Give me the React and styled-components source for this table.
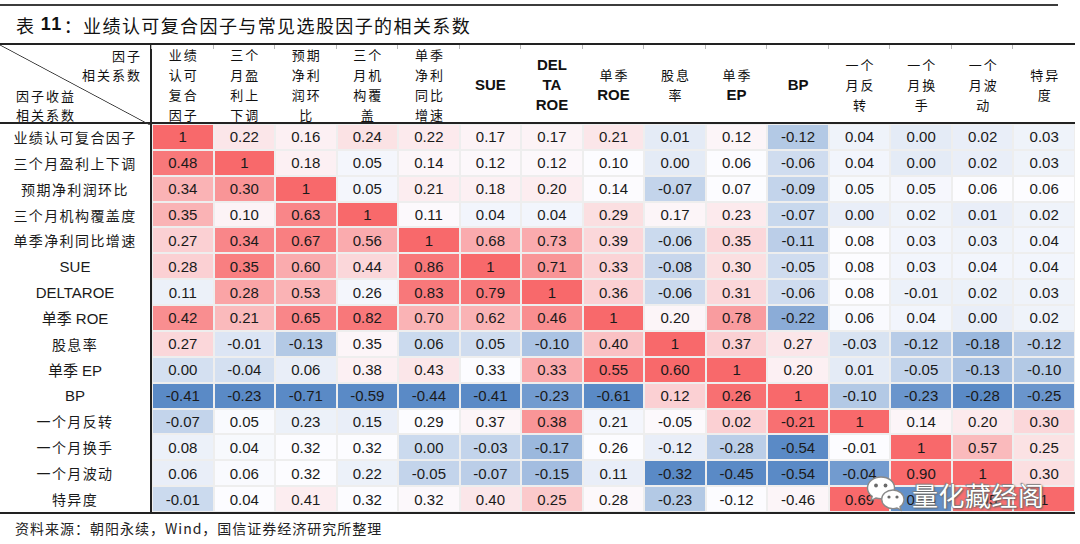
import React from "react"
import styled, { createGlobalStyle } from "styled-components"

const GlobalStyle = createGlobalStyle`
  html, body { margin: 0; padding: 0; background: #fff; }
  body {
    font-family: "Liberation Sans", "Noto Sans CJK SC", sans-serif;
    color: #111;
  }
`

// header columns: each entry is a list of lines, latin lines are drawn bold
const columns = [
  ["业绩", "认可", "复合", "因子"],
  ["三个", "月盈", "利上", "下调"],
  ["预期", "净利", "润环", "比"],
  ["三个", "月机", "构覆", "盖"],
  ["单季", "净利", "同比", "增速"],
  ["SUE"],
  ["DEL", "TA", "ROE"],
  ["单季", "ROE"],
  ["股息", "率"],
  ["单季", "EP"],
  ["BP"],
  ["一个", "月反", "转"],
  ["一个", "月换", "手"],
  ["一个", "月波", "动"],
  ["特异", "度"],
]

const rowNames = [
  "业绩认可复合因子",
  "三个月盈利上下调",
  "预期净利润环比",
  "三个月机构覆盖度",
  "单季净利同比增速",
  "SUE",
  "DELTAROE",
  "单季 ROE",
  "股息率",
  "单季 EP",
  "BP",
  "一个月反转",
  "一个月换手",
  "一个月波动",
  "特异度",
]

const values = [
  "1 0.22 0.16 0.24 0.22 0.17 0.17 0.21 0.01 0.12 -0.12 0.04 0.00 0.02 0.03",
  "0.48 1 0.18 0.05 0.14 0.12 0.12 0.10 0.00 0.06 -0.06 0.04 0.00 0.02 0.03",
  "0.34 0.30 1 0.05 0.21 0.18 0.20 0.14 -0.07 0.07 -0.09 0.05 0.05 0.06 0.06",
  "0.35 0.10 0.63 1 0.11 0.04 0.04 0.29 0.17 0.23 -0.07 0.00 0.02 0.01 0.02",
  "0.27 0.34 0.67 0.56 1 0.68 0.73 0.39 -0.06 0.35 -0.11 0.08 0.03 0.03 0.04",
  "0.28 0.35 0.60 0.44 0.86 1 0.71 0.33 -0.08 0.30 -0.05 0.08 0.03 0.04 0.04",
  "0.11 0.28 0.53 0.26 0.83 0.79 1 0.36 -0.06 0.31 -0.06 0.08 -0.01 0.02 0.03",
  "0.42 0.21 0.65 0.82 0.70 0.62 0.46 1 0.20 0.78 -0.22 0.06 0.04 0.00 0.02",
  "0.27 -0.01 -0.13 0.35 0.06 0.05 -0.10 0.40 1 0.37 0.27 -0.03 -0.12 -0.18 -0.12",
  "0.00 -0.04 0.06 0.38 0.43 0.33 0.33 0.55 0.60 1 0.20 0.01 -0.05 -0.13 -0.10",
  "-0.41 -0.23 -0.71 -0.59 -0.44 -0.41 -0.23 -0.61 0.12 0.26 1 -0.10 -0.23 -0.28 -0.25",
  "-0.07 0.05 0.23 0.15 0.29 0.37 0.38 0.21 -0.05 0.02 -0.21 1 0.14 0.20 0.30",
  "0.08 0.04 0.32 0.32 0.00 -0.03 -0.17 0.26 -0.12 -0.28 -0.54 -0.01 1 0.57 0.25",
  "0.06 0.06 0.32 0.22 -0.05 -0.07 -0.15 0.11 -0.32 -0.45 -0.54 -0.04 0.90 1 0.30",
  "-0.01 0.04 0.41 0.32 0.32 0.40 0.25 0.28 -0.23 -0.12 -0.46 0.69 0.85 0.95 1",
].map((r) => r.split(" "))

// shade of each cell, -1 = full blue, 0 = white, 1 = full red (read off the sheet)
const tones = [
  [1, 0.15, 0.08, 0.18, 0.12, 0.06, 0.06, 0.15, -0.15, 0.05, -0.45, -0.08, -0.15, -0.12, -0.08],
  [0.9, 1, 0.08, -0.05, 0.04, 0.03, 0.03, 0, -0.15, 0, -0.28, -0.06, -0.15, -0.12, -0.08],
  [0.5, 0.7, 1, -0.05, 0.1, 0.08, 0.1, 0.01, -0.35, 0, -0.35, -0.03, -0.04, 0, 0],
  [0.5, 0.06, 0.8, 1, 0.02, -0.06, -0.06, 0.2, 0.05, 0.12, -0.32, -0.12, -0.08, -0.12, -0.08],
  [0.3, 0.8, 0.85, 0.55, 1, 0.55, 0.55, 0.25, -0.3, 0.25, -0.4, 0, -0.06, -0.08, -0.06],
  [0.3, 0.85, 0.55, 0.25, 0.9, 1, 0.7, 0.28, -0.33, 0.2, -0.28, 0, -0.06, -0.06, -0.06],
  [-0.1, 0.6, 0.5, -0.05, 0.9, 0.9, 1, 0.3, -0.3, 0.25, -0.28, 0, -0.1, -0.1, -0.08],
  [0.75, 0.45, 0.8, 0.9, 0.5, 0.5, 0.75, 1, 0.05, 0.65, -0.7, -0.02, -0.06, -0.12, -0.08],
  [0.25, -0.2, -0.45, 0.05, -0.3, -0.28, -0.5, 0.4, 1, 0.3, 0.15, -0.22, -0.42, -0.6, -0.42],
  [-0.25, -0.25, -0.12, 0.08, 0.15, 0, 0.55, 0.95, 1, 1, 0.08, -0.15, -0.35, -0.5, -0.45],
  [-1, -1, -1, -1, -1, -1, -0.85, -1, 0.3, 0.95, 1, -0.45, -0.9, -1, -0.9],
  [-0.35, -0.02, -0.1, -0.12, 0, 0.05, 0.7, -0.05, 0.02, 0.3, 0.95, 1, 0.05, 0.12, 0.25],
  [-0.1, -0.03, 0, 0, -0.3, -0.35, -0.6, 0, -0.12, -0.4, -1, 0, 1, 0.45, 0.18],
  [-0.12, -0.02, 0, -0.1, -0.35, -0.4, -0.55, -0.12, -1, -1, -1, -0.85, 1, 1, 0.2],
  [-0.3, 0, 0.1, 0, 0.03, 0.15, 0.35, 0.03, -0.45, 0, 0.05, 1, -0.95, 0.95, 1],
]

const WHITE = [252, 252, 255]
const RED = [248, 105, 107]
const BLUE = [90, 138, 198]

const heat = (t) => {
  const end = t >= 0 ? RED : BLUE
  const k = Math.abs(t)
  const c = WHITE.map((v, i) => Math.round(v + (end[i] - v) * k))
  return `rgb(${c.join(",")})`
}

const isLatin = (s) => /^[A-Za-z ]+$/.test(s)

export default function App() {
  return (
    <Page>
      <GlobalStyle />
      <TopRule />
      <Title>
        表 <b>11</b>：业绩认可复合因子与常见选股因子的相关系数
      </Title>
      <Table>
        <HeadRow>
          <Corner>
            <CornerTop>
              <span>因子</span>
              <span>相关系数</span>
            </CornerTop>
            <CornerBottom>
              <span>因子收益</span>
              <span>相关系数</span>
            </CornerBottom>
          </Corner>
          {columns.map((lines, i) => (
            <HeadCell key={i}>
              {lines.map((l, j) => (
                <HeadLine key={j} $latin={isLatin(l)}>
                  {l}
                </HeadLine>
              ))}
            </HeadCell>
          ))}
        </HeadRow>
        <Body>
          {rowNames.map((name, r) => (
            <React.Fragment key={r}>
              <RowLabel $latin={isLatin(name.replace(/单季 /, ""))}>{name}</RowLabel>
              {values[r].map((v, c) => (
                <Cell key={c} $tone={tones[r][c]}>
                  {v}
                </Cell>
              ))}
            </React.Fragment>
          ))}
        </Body>
      </Table>
      <Footer>资料来源：朝阳永续，Wind，国信证券经济研究所整理</Footer>
      <Watermark>
        <WeChatLogo />
        <MarkText>量化藏经阁</MarkText>
      </Watermark>
    </Page>
  )
}

function WeChatLogo() {
  return (
    <svg width="40" height="38" viewBox="0 0 40 38">
      <path
        d="M15 2C7.3 2 1.5 7 1.5 13c0 3.4 1.8 6.4 4.7 8.4L5 25.5l4.8-2.5c1.6.5 3.4.8 5.2.8 7.7 0 13.5-5 13.5-11S22.7 2 15 2z"
        fill="#fff"
        stroke="#8a8a8a"
        strokeWidth="1.4"
      />
      <circle cx="10" cy="10.5" r="1.9" fill="#6a6a6a" />
      <circle cx="19.5" cy="10.5" r="1.9" fill="#6a6a6a" />
      <path
        d="M27 15c-6.4 0-11.3 4.2-11.3 9.3s4.9 9.3 11.3 9.3c1.4 0 2.8-.2 4-.6l4 2.1-1-3.4c2.5-1.7 4-4.3 4-7.4 0-5.1-4.9-9.3-11-9.3z"
        fill="#fff"
        stroke="#8a8a8a"
        strokeWidth="1.4"
      />
      <circle cx="23" cy="22" r="1.6" fill="#6a6a6a" />
      <circle cx="31" cy="22" r="1.6" fill="#6a6a6a" />
    </svg>
  )
}

const Page = styled.div`
  position: relative;
  width: 1080px;
  height: 544px;
  overflow: hidden;
  background: #fff;
`
const TopRule = styled.div`
  margin-top: 4px;
  width: 1058px;
  height: 2px;
  background: #3c3c3c;
`
const Title = styled.div`
  height: 37px;
  display: flex;
  align-items: center;
  padding-left: 16px;
  font-family: "Noto Sans CJK SC", sans-serif;
  font-size: 18px;
  letter-spacing: 1.4px;
  white-space: pre;
  b {
    font-family: "Liberation Sans", sans-serif;
    font-weight: 700;
    margin-right: 1px;
  }
`
const Table = styled.div`
  width: 1075px;
  border-top: 2px solid #222;
  border-bottom: 2px solid #222;
`
const HeadRow = styled.div`
  display: grid;
  grid-template-columns: 152px repeat(15, 1fr);
  height: 77px;
  border-bottom: 2px solid #222;
`
const Corner = styled.div`
  box-sizing: border-box;
  border-right: 2px solid #222;
  background: linear-gradient(
    to top right,
    transparent calc(50% - 0.8px),
    #333 50%,
    transparent calc(50% + 0.8px)
  );
  display: flex;
  flex-direction: column;
  justify-content: space-between;
  padding: 1px 0 1px;
  font-family: "Noto Sans CJK SC", sans-serif;
  font-size: 13px;
  letter-spacing: 2px;
  line-height: 19px;
`
const CornerTop = styled.div`
  display: flex;
  flex-direction: column;
  align-items: flex-end;
  padding-right: 8px;
`
const CornerBottom = styled.div`
  display: flex;
  flex-direction: column;
  align-items: flex-start;
  padding-left: 16px;
`
const HeadCell = styled.div`
  position: relative;
  display: flex;
  flex-direction: column;
  align-items: center;
  justify-content: center;
  &::before {
    content: "";
    position: absolute;
    left: -1px;
    top: 0;
    width: 1px;
    height: 4px;
    background: #b8b8b8;
  }
`
const HeadLine = styled.span`
  line-height: 20px;
  font-family: ${(p) =>
    p.$latin ? `"Liberation Sans", sans-serif` : `"Noto Sans CJK SC", sans-serif`};
  font-size: ${(p) => (p.$latin ? "15px" : "13px")};
  font-weight: ${(p) => (p.$latin ? 700 : 400)};
  letter-spacing: ${(p) => (p.$latin ? "0" : "2px")};
  margin-right: ${(p) => (p.$latin ? "0" : "-2px")};
`
const Body = styled.div`
  display: grid;
  grid-template-columns: 152px repeat(15, 1fr);
  grid-template-rows: repeat(15, 1fr);
  height: 388px;
`
const RowLabel = styled.div`
  box-sizing: border-box;
  border-right: 2px solid #222;
  display: flex;
  align-items: center;
  justify-content: center;
  font-family: "Noto Sans CJK SC", sans-serif;
  font-size: ${(p) => (p.$latin ? "15px" : "14px")};
  letter-spacing: ${(p) => (p.$latin ? "0" : "1.4px")};
  color: #1a1a1a;
  ${(p) => p.$latin && `font-family: "Liberation Sans", "Noto Sans CJK SC", sans-serif;`}
`
const Cell = styled.div`
  box-sizing: border-box;
  border: 1px solid #eeeeee;
  display: flex;
  align-items: center;
  justify-content: center;
  font-size: 15px;
  color: #1a1a1a;
  background: ${(p) => heat(p.$tone)};
`
const Footer = styled.div`
  height: 28px;
  display: flex;
  align-items: center;
  padding-left: 15px;
  font-family: "Noto Sans CJK SC", sans-serif;
  font-size: 14px;
  letter-spacing: 1px;
  color: #222;
`
const Watermark = styled.div`
  position: absolute;
  left: 866px;
  top: 475px;
  display: flex;
  align-items: center;
  gap: 6px;
`
const MarkText = styled.span`
  font-family: "Noto Sans CJK SC", sans-serif;
  font-size: 26px;
  color: #fff;
  letter-spacing: 0.5px;
  text-shadow: 0 0 1px #555, 1px 1px 2px #666, -1px -1px 1px #888;
`
